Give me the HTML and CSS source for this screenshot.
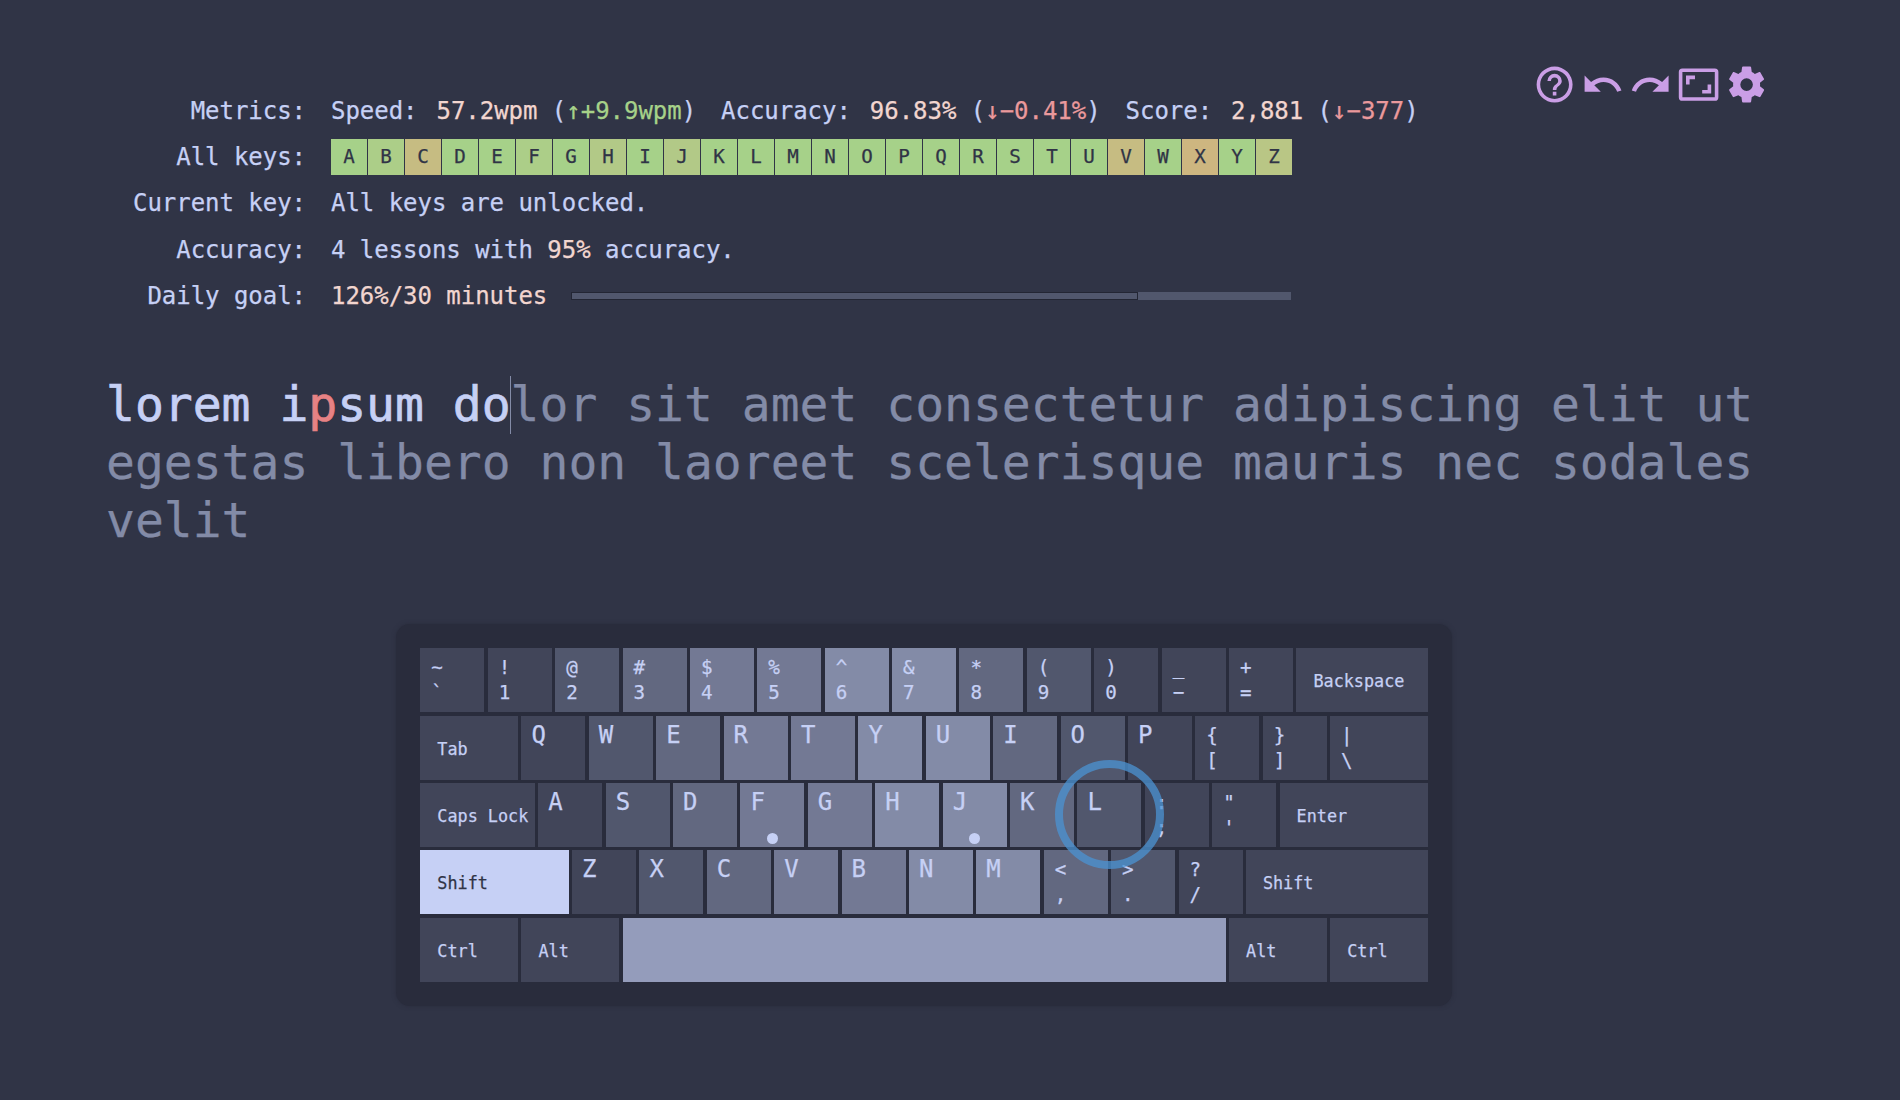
FILE: index.html
```html
<!DOCTYPE html>
<html lang="en">
<head>
<meta charset="utf-8">
<title>Typing practice</title>
<link rel="stylesheet" href="styles.css">
</head>
<body>
<main class="page">
  <header class="header">
    <dl class="stats">
      <dt>Metrics:</dt>
      <dd class="metrics">
        <span class="metric"><span>Speed:</span><span><b>57.2wpm</b> (<i class="up">↑+9.9wpm</i>)</span></span>
        <span class="metric"><span>Accuracy:</span><span><b>96.83%</b> (<i class="down">↓−0.41%</i>)</span></span>
        <span class="metric"><span>Score:</span><span><b>2,881</b> (<i class="down">↓−377</i>)</span></span>
      </dd>
      <dt>All keys:</dt>
      <dd class="keyset">
        <span>A</span><span class="c2">B</span><span class="c5">C</span><span>D</span><span>E</span><span class="c2">F</span><span>G</span><span class="c3">H</span><span>I</span><span class="c3">J</span><span>K</span><span>L</span><span>M</span><span>N</span><span>O</span><span>P</span><span>Q</span><span>R</span><span>S</span><span>T</span><span>U</span><span class="c5">V</span><span>W</span><span class="c6">X</span><span>Y</span><span class="c4">Z</span>
      </dd>
      <dt>Current key:</dt>
      <dd>All keys are unlocked.</dd>
      <dt>Accuracy:</dt>
      <dd>4 lessons with <b>95%</b> accuracy.</dd>
      <dt>Daily goal:</dt>
      <dd class="goal"><b>126%/30 minutes</b><span class="bar"><span class="bar-fill"></span></span></dd>
    </dl>
    <nav class="tools">
      <svg viewBox="0 0 24 24"><path d="M11,18H13V16H11V18M12,2A10,10 0 0,0 2,12A10,10 0 0,0 12,22A10,10 0 0,0 22,12A10,10 0 0,0 12,2M12,20C7.59,20 4,16.41 4,12C4,7.59 7.59,4 12,4C16.41,4 20,7.59 20,12C20,16.41 16.41,20 12,20M12,6A4,4 0 0,0 8,10H10A2,2 0 0,1 12,8A2,2 0 0,1 14,10C14,12 11,11.75 11,15H13C13,12.75 16,12.5 16,10A4,4 0 0,0 12,6Z"/></svg>
      <svg viewBox="0 0 24 24"><path d="M12.5 8c-2.65 0-5.05.99-6.9 2.6L2 7v9h9l-3.62-3.62c1.39-1.16 3.16-1.88 5.12-1.88 3.54 0 6.55 2.31 7.6 5.5l2.37-.78C21.08 11.03 17.15 8 12.5 8z"/></svg>
      <svg viewBox="0 0 24 24"><path d="M18.4 10.6C16.55 8.99 14.15 8 11.5 8c-4.65 0-8.58 3.03-9.96 7.22L3.9 16c1.05-3.19 4.05-5.5 7.6-5.5 1.95 0 3.73.72 5.12 1.88L13 16h9V7l-3.6 3.6z"/></svg>
      <svg viewBox="0 0 24 24"><path d="M19,12H17V15H14V17H19V12M7,9H10V7H5V12H7V9M21,3H3A2,2 0 0,0 1,5V19A2,2 0 0,0 3,21H21A2,2 0 0,0 23,19V5A2,2 0 0,0 21,3M21,19H3V5H21V19Z"/></svg>
      <svg viewBox="0 0 24 24"><path d="M12,15.5A3.5,3.5 0 0,1 8.5,12A3.5,3.5 0 0,1 12,8.5A3.5,3.5 0 0,1 15.5,12A3.5,3.5 0 0,1 12,15.5M19.43,12.97C19.47,12.65 19.5,12.33 19.5,12C19.5,11.67 19.47,11.34 19.43,11L21.54,9.37C21.73,9.22 21.78,8.95 21.66,8.73L19.66,5.27C19.54,5.05 19.27,4.96 19.05,5.05L16.56,6.05C16.04,5.66 15.5,5.32 14.87,5.07L14.5,2.42C14.46,2.18 14.25,2 14,2H10C9.75,2 9.54,2.18 9.5,2.42L9.13,5.07C8.5,5.32 7.96,5.66 7.44,6.05L4.95,5.05C4.73,4.96 4.46,5.05 4.34,5.27L2.34,8.73C2.21,8.95 2.27,9.22 2.46,9.37L4.57,11C4.53,11.34 4.5,11.67 4.5,12C4.5,12.33 4.53,12.65 4.57,12.97L2.46,14.63C2.27,14.78 2.21,15.05 2.34,15.27L4.34,18.73C4.46,18.95 4.73,19.03 4.95,18.95L7.44,17.94C7.96,18.34 8.5,18.68 9.13,18.93L9.5,21.58C9.54,21.82 9.75,22 10,22H14C14.25,22 14.46,21.82 14.5,21.58L14.87,18.93C15.5,18.67 16.04,18.34 16.56,17.94L19.05,18.95C19.27,19.03 19.54,18.95 19.66,18.73L21.66,15.27C21.78,15.05 21.73,14.78 21.54,14.63L19.43,12.97Z"/></svg>
    </nav>
  </header>

  <p class="lesson"><span class="typed">lorem i</span><span class="miss">p</span><span class="typed">sum do</span><span class="cursor"></span>lor sit amet consectetur adipiscing elit ut egestas libero non laoreet scelerisque mauris nec sodales velit</p>

  <section class="keyboard">
    <div class="row">
      <div class="key">~<br>`</div><div class="key">!<br>1</div><div class="key z2">@<br>2</div><div class="key z3">#<br>3</div><div class="key z4">$<br>4</div><div class="key z4">%<br>5</div><div class="key z5">^<br>6</div><div class="key z5">&amp;<br>7</div><div class="key z3">*<br>8</div><div class="key z2">(<br>9</div><div class="key">)<br>0</div><div class="key">_<br>−</div><div class="key">+<br>=</div><div class="key named w200">Backspace</div>
    </div>
    <div class="row">
      <div class="key named w150">Tab</div><div class="key letter">Q</div><div class="key letter z2">W</div><div class="key letter z3">E</div><div class="key letter z4">R</div><div class="key letter z4">T</div><div class="key letter z5">Y</div><div class="key letter z5">U</div><div class="key letter z3">I</div><div class="key letter z2">O</div><div class="key letter">P</div><div class="key">{<br>[</div><div class="key">}<br>]</div><div class="key w150">|<br>\</div>
    </div>
    <div class="row">
      <div class="key named w175">Caps Lock</div><div class="key letter">A</div><div class="key letter z2">S</div><div class="key letter z3">D</div><div class="key letter z4 home">F</div><div class="key letter z4">G</div><div class="key letter z5">H</div><div class="key letter z5 home">J</div><div class="key letter z3">K</div><div class="key letter z2 next">L</div><div class="key">:<br>;</div><div class="key">"<br>'</div><div class="key named w225">Enter</div>
    </div>
    <div class="row">
      <div class="key named w225 pressed">Shift</div><div class="key letter">Z</div><div class="key letter z2">X</div><div class="key letter z3">C</div><div class="key letter z4">V</div><div class="key letter z4">B</div><div class="key letter z5">N</div><div class="key letter z5">M</div><div class="key z3">&lt;<br>,</div><div class="key z2">&gt;<br>.</div><div class="key">?<br>/</div><div class="key named w275">Shift</div>
    </div>
    <div class="row">
      <div class="key named w150">Ctrl</div><div class="key named w150">Alt</div><div class="key space"></div><div class="key named w150">Alt</div><div class="key named w150">Ctrl</div>
    </div>
  </section>
</main>
</body>
</html>
```
FILE: styles.css
```css
*, *::after { box-sizing: border-box; }

body {
  margin: 0;
  background: #303446;
  color: #c6d0f5;
  font-family: "DejaVu Sans Mono", "Liberation Mono", monospace;
  font-size: 24px;
  -webkit-text-stroke: .25px;
}

.page {
  height: 1100px;
  padding: 63px 132px 0 106px;
  display: flex;
  flex-direction: column;
}

.header {
  height: 313px;
  display: flex;
  justify-content: space-between;
  align-items: flex-start;
}

b, i { font-weight: normal; font-style: normal; }
b { color: #f2d5cf; }
.up { color: #a6d189; }
.down { color: #ea999c; }

.stats {
  margin: 25px 0 0;
  display: grid;
  grid-template-columns: 200px auto;
  column-gap: 25px;
  grid-auto-rows: 46.2px;
  line-height: 46.2px;
  letter-spacing: -.03px;
  white-space: nowrap;
}
.stats dt { text-align: right; }
.stats dd { margin: 0; }

.metrics { display: flex; gap: 25px; }
.metric { display: flex; gap: 19px; }

.keyset {
  display: flex;
  align-items: center;
  gap: 1px;
  font-size: 19.2px;
  line-height: 36px;
  color: #303446;
}
.keyset span {
  width: 36px;
  height: 36px;
  text-align: center;
  background: #a6d189;
}
.keyset .c2 { background: #acce88; }
.keyset .c3 { background: #b2c987; }
.keyset .c4 { background: #b9c685; }
.keyset .c5 { background: #c6bc82; }
.keyset .c6 { background: #cdb680; }

.goal { display: flex; align-items: center; gap: 24px; }
.bar { width: 720px; height: 8px; background: #51576d; }
.bar-fill {
  display: block;
  width: 567px;
  height: 8px;
  border: 1px solid #232634;
}

.tools { display: flex; gap: 4.8px; }
.tools svg { width: 43.2px; height: 43.2px; fill: #ca9ee6; }

.lesson {
  margin: 0;
  width: 1652px;
  height: 248.2px;
  font-size: 48px;
  line-height: 57.8px;
  color: #838ba7;
}
.typed { color: #c6d0f5; -webkit-text-stroke: .7px; }
.miss { color: #e78284; -webkit-text-stroke: .7px; }
.cursor {
  display: inline-block;
  width: 1px;
  height: 58px;
  margin-left: -1px;
  vertical-align: -13px;
  background: #838ba7;
}

.keyboard {
  --unit: 67.4px;
  --gap: 3.4px;
  align-self: flex-start;
  margin-left: 290.35px;
  padding: 24px;
  display: flex;
  flex-direction: column;
  gap: var(--gap);
  border-radius: 14px;
  background: #292c3c;
  box-shadow: 0 0 4px #292c3c;
}
.row { display: flex; gap: var(--gap); }

.key {
  --w: 1;
  position: relative;
  width: calc(var(--unit) * var(--w) - var(--gap));
  height: 64px;
  padding: 7px 0 0 11px;
  background: #414559;
  font-size: 19.2px;
  line-height: 25px;
}
.letter { padding: 5px 0 0 10px; font-size: 24px; line-height: 28px; }
.named {
  padding: 0 0 0 17px;
  font-size: 16.8px;
  line-height: 66px;
  white-space: nowrap;
}
.w150 { --w: 1.5; }
.w175 { --w: 1.75; }
.w200 { --w: 2; }
.w225 { --w: 2.25; }
.w275 { --w: 2.75; }
.z2 { background: #51576d; }
.z3 { background: #626880; }
.z4 { background: #737994; }
.z5 { background: #838ba7; }
.space { --w: 9; background: #949cbb; }
.pressed { background: #c6d0f5; color: #303446; }

.home::after {
  content: "";
  position: absolute;
  left: 26.5px;
  top: 50px;
  width: 11px;
  height: 11px;
  border-radius: 50%;
  background: #c6d0f5;
}
.next::after {
  content: "";
  position: absolute;
  left: -22.5px;
  top: -22.5px;
  z-index: 1;
  width: 109px;
  height: 109px;
  border: 8.5px solid #4b93d3;
  border-radius: 50%;
  opacity: .75;
}
```
